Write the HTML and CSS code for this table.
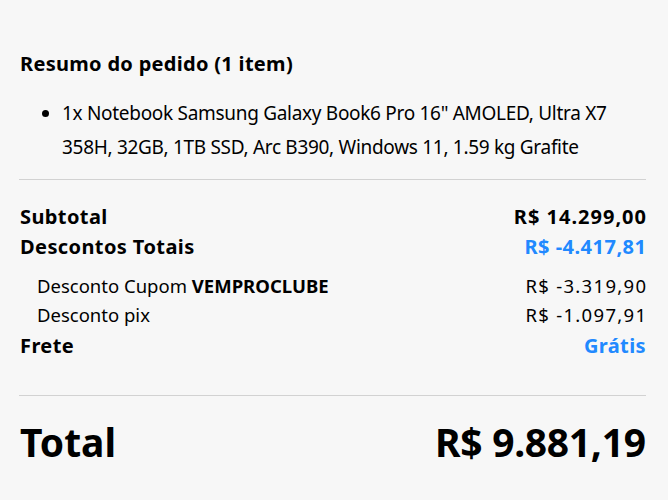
FILE: index.html
```html
<!DOCTYPE html>
<html lang="pt-BR">
<head>
<meta charset="utf-8">
<link rel="stylesheet" href="styles.css">
</head>
<body>
<section class="summary">
  <h2 class="title">Resumo do pedido (1 item)</h2>
  <ul class="items">
    <li>1x Notebook Samsung Galaxy Book6 Pro 16" AMOLED, Ultra X7 358H, 32GB, 1TB SSD, Arc B390, Windows 11, 1.59 kg Grafite</li>
  </ul>
  <hr class="divider">
  <div class="rows">
    <div class="row strong"><span>Subtotal</span><span class="amt">R$ 14.299,00</span></div>
    <div class="row strong"><span>Descontos Totais</span><span class="amt blue narrow">R$ -4.417,81</span></div>
    <div class="subrows">
      <div class="row sub"><span>Desconto Cupom <b>VEMPROCLUBE</b></span><span class="amt">R$ -3.319,90</span></div>
      <div class="row sub"><span>Desconto pix</span><span class="amt">R$ -1.097,91</span></div>
    </div>
    <div class="row strong"><span>Frete</span><span class="blue">Grátis</span></div>
  </div>
  <hr class="divider bottom">
  <div class="row total"><span>Total</span><span class="amt">R$ 9.881,19</span></div>
</section>
</body>
</html>
```
FILE: styles.css
```css
html, body {
  margin: 0;
  padding: 0;
  background: #f7f7f7;
}
body {
  font-family: "Noto Sans", "Open Sans", sans-serif;
  color: #000;
}
.summary {
  padding: 49px 22px 0 20px;
}
.title {
  margin: 0;
  font-size: 20px;
  font-weight: 700;
  line-height: 30px;
  letter-spacing: 0.3px;
}
.items {
  margin: 17px 0 0;
  padding-left: 42px;
  font-size: 19px;
  line-height: 34px;
  letter-spacing: -0.3px;
}
.divider {
  border: 0;
  border-top: 1px solid #d2d2d2;
  margin: 15px 0 0 -1px;
}
.rows {
  padding-top: 22px;
}
.row {
  display: flex;
  justify-content: space-between;
  align-items: baseline;
}
.strong {
  font-size: 20px;
  font-weight: 700;
  line-height: 30px;
  letter-spacing: 0.4px;
}
.strong .amt {
  letter-spacing: 1px;
  margin-right: -1px;
}
.strong .amt.narrow {
  letter-spacing: 0.5px;
  margin-right: -0.5px;
}
.subrows {
  padding: 9px 0 2px;
}
.sub {
  font-size: 18.5px;
  line-height: 29px;
  padding-left: 17px;
  letter-spacing: 0;
}
.sub .amt {
  letter-spacing: 1.3px;
  margin-right: -1.3px;
}
.sub b { font-weight: 700; }
.blue { color: #2189ff; }
.divider.bottom { margin-top: 34px; }
.total {
  font-size: 39px;
  font-weight: 700;
  line-height: 50px;
  padding-top: 21px;
}
.total .amt { letter-spacing: -0.3px; margin-right: 0.3px; }
```
